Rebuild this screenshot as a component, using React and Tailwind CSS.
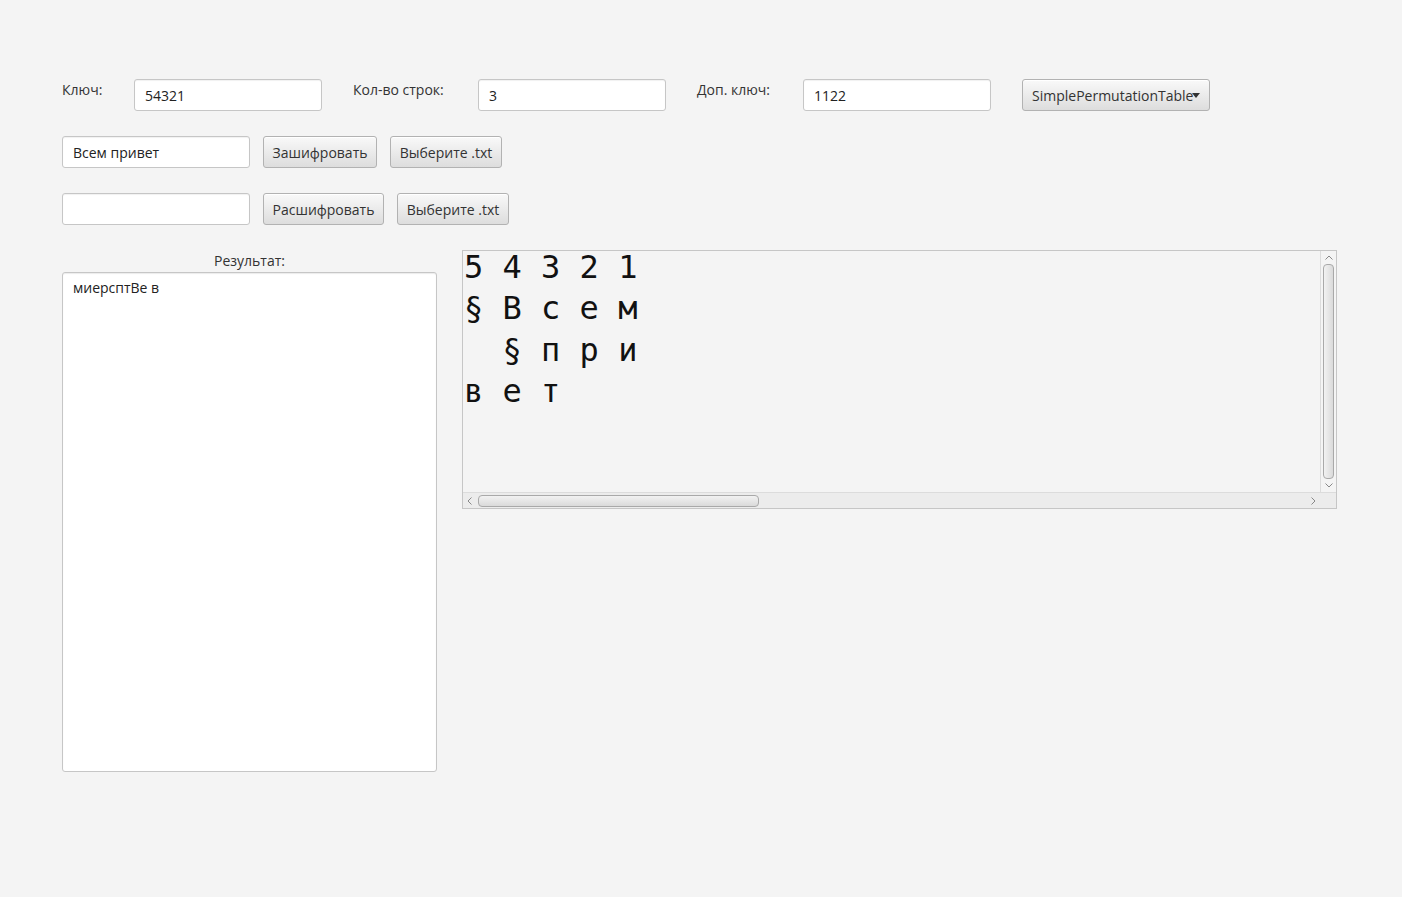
import React from "react";

const font = { fontFamily: '"Open Sans", "Noto Sans", sans-serif' };

function Field({ value, w = "w-[188px]" }) {
  return (
    <div className={`${w} h-[32px] shrink-0 bg-white border border-[#c6c6c6] rounded-[3px] shadow-[inset_0_1px_1px_rgba(0,0,0,0.06)] flex items-center pl-[10px] pt-[1px] text-[14px] text-[#222]`}>
      {value}
    </div>
  );
}

function Btn({ children, w }) {
  return (
    <div className={`${w} h-[32px] shrink-0 rounded-[3px] border border-[#b2b2b2] bg-gradient-to-b from-[#f9f9f9] to-[#dddddd] shadow-[inset_0_1px_0_#ffffff] flex items-center justify-center text-[14px] text-[#333]`}>
      {children}
    </div>
  );
}

function Label({ children, w }) {
  return <div className={`${w} shrink-0 pt-[1px] text-[14px] text-[#333] leading-[20px]`}>{children}</div>;
}

export default function App() {
  const rows = ["5 4 3 2 1", "§ В с е м", "  § п р и", "в е т"];
  return (
    <div className="w-[1402px] h-[897px] bg-[#f4f4f4] pt-[79px] pl-[62px]" style={font}>
      <div className="flex items-start">
        <Label w="w-[72px]">Ключ:</Label>
        <Field value="54321" />
        <div className="w-[31px] shrink-0" />
        <Label w="w-[125px]">Кол-во строк:</Label>
        <Field value="3" />
        <div className="w-[31px] shrink-0" />
        <Label w="w-[106px]">Доп. ключ:</Label>
        <Field value="1122" />
        <div className="w-[31px] shrink-0" />
        <div className="relative w-[188px] h-[32px] rounded-[3px] border border-[#b2b2b2] bg-gradient-to-b from-[#f9f9f9] to-[#dddddd] shadow-[inset_0_1px_0_#ffffff] flex items-center pl-[9px] text-[14px] text-[#333] whitespace-nowrap">
          SimplePermutationTable
          <div className="absolute left-[169px] top-[13px] w-0 h-0 border-l-[4px] border-r-[4px] border-t-[5px] border-l-transparent border-r-transparent border-t-[#333]" />
        </div>
      </div>

      <div className="flex items-start gap-[13px] mt-[25px]">
        <Field value="Всем привет" />
        <Btn w="w-[114px]">Зашифровать</Btn>
        <Btn w="w-[112px]">Выберите .txt</Btn>
      </div>

      <div className="flex items-start gap-[13px] mt-[25px]">
        <Field value="" />
        <Btn w="w-[121px]">Расшифровать</Btn>
        <Btn w="w-[112px]">Выберите .txt</Btn>
      </div>

      <div className="flex items-start gap-[25px] mt-[25px]">
        <div className="w-[375px] shrink-0 flex flex-col">
          <div className="h-[22px] text-center text-[14px] text-[#333] leading-[22px]">Результат:</div>
          <div className="h-[500px] bg-white border border-[#c6c6c6] rounded-[3px] shadow-[inset_0_1px_1px_rgba(0,0,0,0.08)] pl-[10px] pt-[4px] text-[14px] text-[#222]">
            миерсптВе в
          </div>
        </div>

        <div className="w-[875px] h-[259px] shrink-0 border border-[#c6c6c6] bg-[#f4f4f4] flex flex-col">
          <div className="flex-1 flex min-h-0">
            <div
              className="flex-1 pl-[1px] -mt-[4px] text-[32px] leading-[41.3px] text-[#111] whitespace-pre"
              style={{ fontFamily: '"DejaVu Sans Mono", monospace' }}
            >
              {rows.map((r, i) => (
                <div key={i}>{r}</div>
              ))}
            </div>
            <div className="w-[16px] shrink-0 bg-[#f4f4f4] border-l border-[#dcdcdc] flex flex-col items-center">
              <svg width="10" height="12" viewBox="0 0 10 12" className="mt-[1px]">
                <path d="M1.5 7.5 L5 4 L8.5 7.5" fill="none" stroke="#888" strokeWidth="1" />
              </svg>
              <div className="w-[11px] flex-1 rounded-[4px] border border-[#a9a9a9] bg-gradient-to-r from-[#f2f2f2] to-[#dadada]" />
              <svg width="10" height="12" viewBox="0 0 10 12" className="mb-[1px]">
                <path d="M1.5 4.5 L5 8 L8.5 4.5" fill="none" stroke="#888" strokeWidth="1" />
              </svg>
            </div>
          </div>
          <div className="h-[16px] shrink-0 flex border-t border-[#dcdcdc]">
            <div className="flex-1 flex items-center bg-[#ececec]">
              <svg width="12" height="12" viewBox="0 0 12 12" className="ml-[1px]">
                <path d="M7.5 2.5 L4 6 L7.5 9.5" fill="none" stroke="#888" strokeWidth="1" />
              </svg>
              <div className="ml-[2px] w-[281px] h-[12px] rounded-[4px] border border-[#a9a9a9] bg-gradient-to-b from-[#f2f2f2] to-[#dadada]" />
              <div className="flex-1" />
              <svg width="12" height="12" viewBox="0 0 12 12" className="mr-[1px]">
                <path d="M4.5 2.5 L8 6 L4.5 9.5" fill="none" stroke="#888" strokeWidth="1" />
              </svg>
            </div>
            <div className="w-[16px] shrink-0 bg-[#ececec]" />
          </div>
        </div>
      </div>
    </div>
  );
}
